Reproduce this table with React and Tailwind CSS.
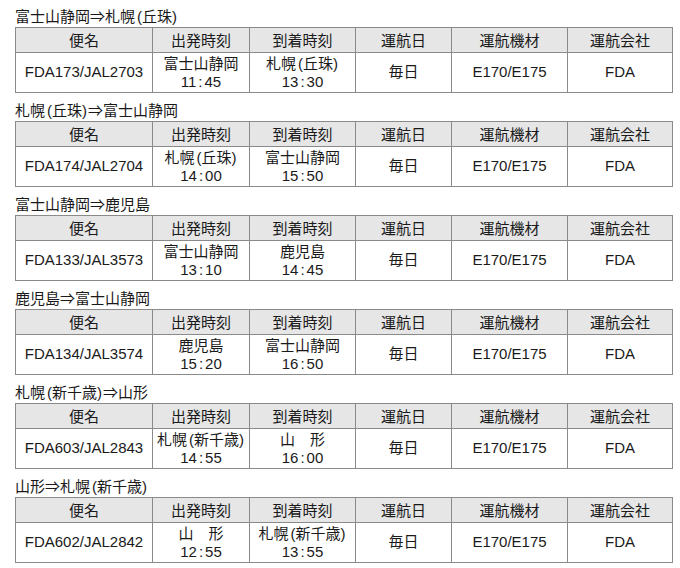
import React from 'react';

const routes = [
  { title: '富士山静岡⇒札幌(丘珠)', flight: 'FDA173/JAL2703', dep: '富士山静岡', depTime: '11:45', arr: '札幌(丘珠)', arrTime: '13:30' },
  { title: '札幌(丘珠)⇒富士山静岡', flight: 'FDA174/JAL2704', dep: '札幌(丘珠)', depTime: '14:00', arr: '富士山静岡', arrTime: '15:50' },
  { title: '富士山静岡⇒鹿児島', flight: 'FDA133/JAL3573', dep: '富士山静岡', depTime: '13:10', arr: '鹿児島', arrTime: '14:45' },
  { title: '鹿児島⇒富士山静岡', flight: 'FDA134/JAL3574', dep: '鹿児島', depTime: '15:20', arr: '富士山静岡', arrTime: '16:50' },
  { title: '札幌(新千歳)⇒山形', flight: 'FDA603/JAL2843', dep: '札幌(新千歳)', depTime: '14:55', arr: '山　形', arrTime: '16:00' },
  { title: '山形⇒札幌(新千歳)', flight: 'FDA602/JAL2842', dep: '山　形', depTime: '12:55', arr: '札幌(新千歳)', arrTime: '13:55' },
];

const headers = ['便名', '出発時刻', '到着時刻', '運航日', '運航機材', '運航会社'];
const widths = ['w-[137px]', 'w-[97px]', 'w-[106px]', 'w-[96px]', 'w-[116px]', 'w-[105px]'];

// parens in the source are set a bit looser than plain half-width ones
function Place({ text }) {
  const parts = text.split(/([()])/);
  return (
    <>
      {parts.map((p, i) =>
        p === '(' ? <span key={i} className="ml-[2px]">(</span>
        : p === ')' ? <span key={i} className="mr-[1px]">)</span>
        : <React.Fragment key={i}>{p}</React.Fragment>
      )}
    </>
  );
}

function Time({ t }) {
  const [h, m] = t.split(':');
  return (
    <span>
      {h}<span className="mx-[2px]">:</span>{m}
    </span>
  );
}

function RouteTable({ r, first }) {
  return (
    <div>
      <div className={`${first ? 'h-[27px]' : 'h-[28px]'} flex items-end pb-[3px] text-[15px] leading-none text-[#1a1a1a]`}>
        <Place text={r.title} />
      </div>
      <table className="border-collapse table-fixed w-[657px] text-[15px] text-[#1a1a1a]">
        <colgroup>
          {widths.map((w, i) => <col key={i} className={w} />)}
        </colgroup>
        <thead>
          <tr className="h-[25px] bg-[#e6e6e6]">
            {headers.map((h) => (
              <th key={h} className="border border-[#8a8a8a] font-normal text-center p-0 leading-none">{h}</th>
            ))}
          </tr>
        </thead>
        <tbody>
          <tr className="h-[40px] bg-white">
            <td className="border border-[#8a8a8a] text-center p-0">{r.flight}</td>
            <td className="border border-[#8a8a8a] text-center p-0 leading-[18px] whitespace-nowrap">
              <div><Place text={r.dep} /></div>
              <div><Time t={r.depTime} /></div>
            </td>
            <td className="border border-[#8a8a8a] text-center p-0 leading-[18px] whitespace-nowrap">
              <div><Place text={r.arr} /></div>
              <div><Time t={r.arrTime} /></div>
            </td>
            <td className="border border-[#8a8a8a] text-center p-0">毎日</td>
            <td className="border border-[#8a8a8a] text-center p-0">E170/E175</td>
            <td className="border border-[#8a8a8a] text-center p-0">FDA</td>
          </tr>
        </tbody>
      </table>
    </div>
  );
}

export default function App() {
  return (
    <div className="w-[680px] h-[568px] bg-white pl-[15px] font-['Liberation_Sans','Noto_Sans_CJK_JP',sans-serif]">
      {routes.map((r, i) => (
        <RouteTable key={i} r={r} first={i === 0} />
      ))}
    </div>
  );
}
